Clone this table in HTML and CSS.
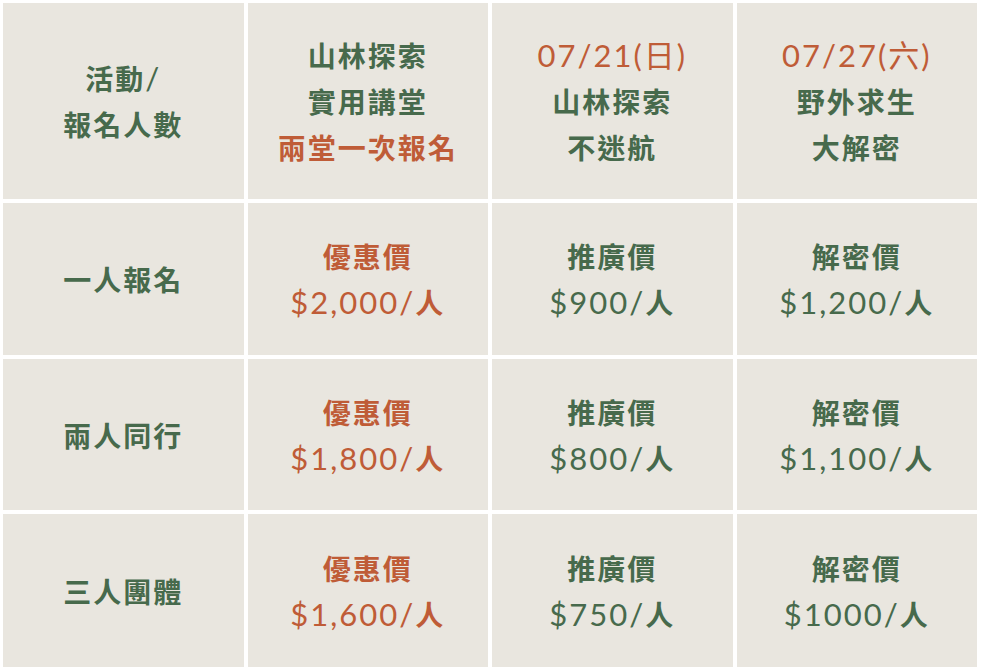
FILE: index.html
```html
<!DOCTYPE html>
<html lang="zh-Hant">
<head>
<meta charset="utf-8">
<title>報名價格</title>
<link rel="stylesheet" href="styles.css">
</head>
<body>
<div class="table">
  <div class="cell"><div>活動<span class="num">/</span></div><div>報名人數</div></div>
  <div class="cell"><div>山林探索</div><div>實用講堂</div><div class="hl">兩堂一次報名</div></div>
  <div class="cell"><div class="hl num">07/21(日)</div><div>山林探索</div><div>不迷航</div></div>
  <div class="cell"><div class="hl num">07/27(六)</div><div>野外求生</div><div>大解密</div></div>

  <div class="cell"><div>一人報名</div></div>
  <div class="cell hl"><div>優惠價</div><div><span class="num">$2,000/</span>人</div></div>
  <div class="cell"><div>推廣價</div><div><span class="num">$900/</span>人</div></div>
  <div class="cell"><div>解密價</div><div><span class="num">$1,200/</span>人</div></div>

  <div class="cell"><div>兩人同行</div></div>
  <div class="cell hl"><div>優惠價</div><div><span class="num">$1,800/</span>人</div></div>
  <div class="cell"><div>推廣價</div><div><span class="num">$800/</span>人</div></div>
  <div class="cell"><div>解密價</div><div><span class="num">$1,100/</span>人</div></div>

  <div class="cell"><div>三人團體</div></div>
  <div class="cell hl"><div>優惠價</div><div><span class="num">$1,600/</span>人</div></div>
  <div class="cell"><div>推廣價</div><div><span class="num">$750/</span>人</div></div>
  <div class="cell"><div>解密價</div><div><span class="num">$1000/</span>人</div></div>
</div>
</body>
</html>
```
FILE: styles.css
```css
html, body {
  margin: 0;
  padding: 0;
  background: #ffffff;
}
.table {
  width: 981px;
  box-sizing: border-box;
  padding: 3px 4px 5px 3px;
  display: grid;
  grid-template-columns: repeat(4, 1fr);
  grid-template-rows: 196px 152px 151px 153px;
  gap: 4px;
  font-family: "Noto Sans CJK TC", sans-serif;
  font-weight: 700;
  font-size: 28px;
  letter-spacing: 2px;
  color: #476a4c;
}
.cell {
  background: #e9e6df;
  display: flex;
  flex-direction: column;
  justify-content: center;
  align-items: center;
  line-height: 46px;
  text-align: center;
}
.hl {
  color: #bf5c37;
}
.num {
  font-family: "Lato", "Noto Sans CJK TC", sans-serif;
  font-weight: 400;
  font-size: 31px;
  letter-spacing: 2px;
}
```
